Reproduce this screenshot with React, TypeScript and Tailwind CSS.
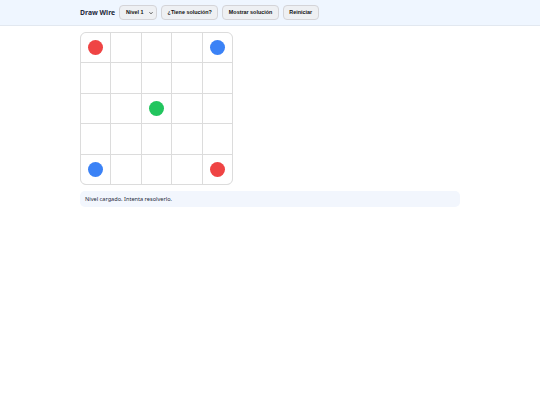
const dots: Record<number, string> = {
  0: 'bg-[#ef4444]',
  4: 'bg-[#3b82f6]',
  12: 'bg-[#22c55e]',
  20: 'bg-[#3b82f6]',
  24: 'bg-[#ef4444]',
};

const btn =
  "h-[15px] px-[5.5px] rounded-[4px] border border-[#d4d4d8] bg-[#eef0f3] text-[5.4px] font-bold text-[#111] leading-none flex items-center font-['Liberation_Sans',Arial,sans-serif]";

export default function App() {
  return (
    <div className="min-h-screen bg-white font-['Noto_Sans',sans-serif]">
      <header className="h-[26px] bg-[#eff6ff] border-b border-[#e2e8f0]">
        <div className="max-w-[380px] mx-auto h-full flex items-center gap-[4px]">
          <h1 className="mt-[2px] text-[6.8px] font-bold text-[#1e293b]">Draw Wire</h1>
          <div className={`${btn} w-[38px] justify-between pl-[6px] pr-[2px]`}>
            <span>Nivel 1</span>
            <svg width="6" height="6" viewBox="0 0 24 24" fill="none" stroke="#333" strokeWidth="3.5">
              <path d="M6 9l6 6 6-6" />
            </svg>
          </div>
          <button className={btn}>¿Tiene solución?</button>
          <button className={btn}>Mostrar solución</button>
          <button className={btn}>Reiniciar</button>
        </div>
      </header>

      <main className="max-w-[380px] mx-auto pt-[6px]">
        <div className="w-[153px] h-[153px] grid grid-cols-5 grid-rows-5 gap-px bg-[#dcdcdc] border border-[#dcdcdc] rounded-[6px] overflow-hidden">
          {Array.from({ length: 25 }).map((_, i) => (
            <div key={i} className="bg-white flex items-center justify-center">
              {dots[i] && <span className={`w-[15px] h-[15px] rounded-full ${dots[i]}`} />}
            </div>
          ))}
        </div>

        <div className="mt-[6px] h-[16px] rounded-[5px] bg-[#f2f6fd] flex items-center px-[5px] text-[5.6px] text-[#1e293b]">
          Nivel cargado. Intenta resolverlo.
        </div>
      </main>
    </div>
  );
}
